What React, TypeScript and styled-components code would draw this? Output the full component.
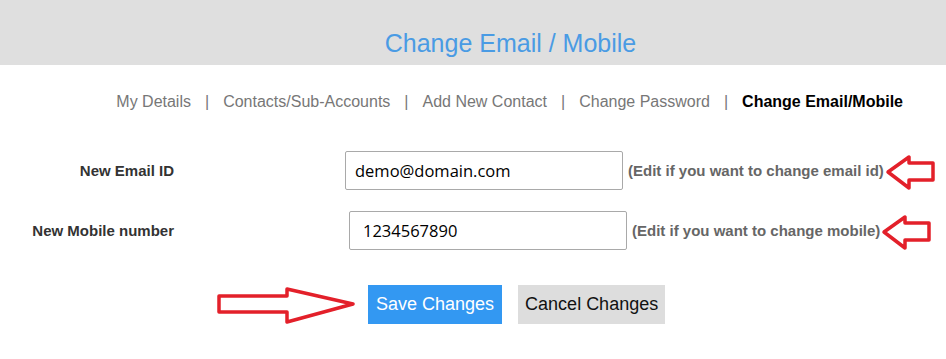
import { FC } from 'react'
import styled, { createGlobalStyle } from 'styled-components'

const GlobalStyle = createGlobalStyle`
  body {
    margin: 0;
    background: #fff;
    font-family: "Liberation Sans", Arial, sans-serif;
  }
`

const Page = styled.div`
  width: 946px;
  height: 359px;
  overflow: hidden;
`

const Header = styled.div`
  background: #dfdfdf;
  height: 65px;
  padding-left: 75px;
  display: flex;
  align-items: center;
  justify-content: center;
  box-sizing: border-box;
  padding-top: 22px;
`

const Title = styled.h1`
  margin: 0;
  font-size: 25px;
  font-weight: normal;
  color: #4a9be4;
`

const Nav = styled.nav`
  display: flex;
  justify-content: flex-end;
  align-items: center;
  padding: 28px 43px 0 0;
  font-size: 16px;
  line-height: 18px;
  color: #777;
`

const NavItem = styled.a<{ active?: boolean }>`
  color: ${({ active }) => (active ? '#000' : '#777')};
  font-weight: ${({ active }) => (active ? 'bold' : 'normal')};
  text-decoration: none;
`

const Separator = styled.span`
  margin: 0 14px;
`

const Form = styled.form`
  display: flex;
  flex-direction: column;
  gap: 21px;
  padding-top: 40px;
`

const Row = styled.div`
  display: flex;
  align-items: center;
  height: 39px;
`

const Label = styled.label`
  width: 174px;
  text-align: right;
  font-size: 15px;
  font-weight: bold;
  color: #333;
`

const Input = styled.input<{ offset: number; indent: number }>`
  margin-left: ${({ offset }) => offset}px;
  width: 278px;
  height: 39px;
  box-sizing: border-box;
  border: 1px solid #a9a9a9;
  border-radius: 2px;
  padding: 0 0 0 ${({ indent }) => indent}px;
  font-family: "Open Sans", "Noto Sans", sans-serif;
  font-size: 16.5px;
  color: #000;
  outline: none;
`

const Hint = styled.span`
  margin-left: 5px;
  font-size: 15px;
  font-weight: bold;
  color: #666;
  white-space: nowrap;
`

const Buttons = styled.div`
  display: flex;
  align-items: center;
  padding: 34px 0 0 216px;
`

const Button = styled.button<{ primary?: boolean }>`
  height: 39px;
  border: none;
  padding: 0 ${({ primary }) => (primary ? '8px' : '7px')};
  font-family: "Liberation Sans", Arial, sans-serif;
  font-size: 18px;
  background: ${({ primary }) => (primary ? '#3398f2' : '#dddddd')};
  color: ${({ primary }) => (primary ? '#fff' : '#111')};
  margin-left: ${({ primary }) => (primary ? '12px' : '16px')};
  cursor: pointer;
`

const LeftArrow: FC = () => (
  <svg width="52" height="42" viewBox="0 0 52 42" style={{ flexShrink: 0 }}>
    <polygon
      points="4,22 25,7 25,13 49,13 49,30 25,30 25,38"
      fill="none"
      stroke="#e3202a"
      strokeWidth="3.5"
      strokeLinejoin="round"
    />
  </svg>
)

const RightArrow: FC = () => (
  <svg width="140" height="40" viewBox="0 0 140 40">
    <polygon
      points="3,12 71,12 71,5 137,20 71,38 71,28 3,28"
      fill="none"
      stroke="#e3202a"
      strokeWidth="3.5"
      strokeLinejoin="round"
    />
  </svg>
)

const App: FC = () => {
  const links = ['My Details', 'Contacts/Sub-Accounts', 'Add New Contact', 'Change Password']

  return (
    <Page>
      <GlobalStyle />
      <Header>
        <Title>Change Email / Mobile</Title>
      </Header>
      <Nav>
        {links.map((link) => (
          <span key={link}>
            <NavItem href="#">{link}</NavItem>
            <Separator>|</Separator>
          </span>
        ))}
        <NavItem active href="#">
          Change Email/Mobile
        </NavItem>
      </Nav>
      <Form onSubmit={(event) => event.preventDefault()}>
        <Row>
          <Label>New Email ID</Label>
          <Input offset={171} indent={9} defaultValue="demo@domain.com" />
          <Hint>(Edit if you want to change email id)</Hint>
          <LeftArrow />
        </Row>
        <Row>
          <Label>New Mobile number</Label>
          <Input offset={175} indent={13} defaultValue="1234567890" />
          <Hint>(Edit if you want to change mobile)</Hint>
          <LeftArrow />
        </Row>
      </Form>
      <Buttons>
        <RightArrow />
        <Button primary>Save Changes</Button>
        <Button type="button">Cancel Changes</Button>
      </Buttons>
    </Page>
  )
}

export default App
